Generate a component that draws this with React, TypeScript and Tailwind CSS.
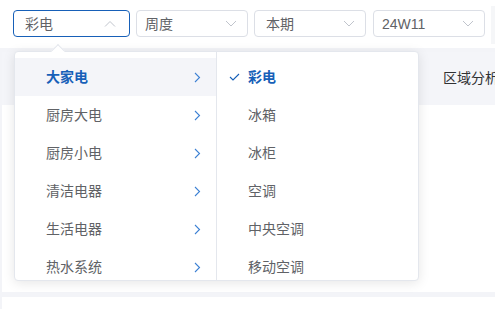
import React from "react";

const font = { fontFamily: '"Liberation Sans","Noto Sans CJK SC",sans-serif' };

function Chevron({ up, color = "#c0c4cc" }: { up?: boolean; color?: string }) {
  return (
    <svg width="12" height="7" viewBox="0 0 12 7" className="shrink-0">
      <path d={up ? "M1 6.5 L6 1.5 L11 6.5" : "M1 1 L6 6 L11 1"} fill="none" stroke={color} strokeWidth="1" />
    </svg>
  );
}

function Select({ label, w, active, pl = "pl-[11px]", pr = "pr-[10px]" }: { label: string; w: string; active?: boolean; pl?: string; pr?: string }) {
  return (
    <div
      className={`${w} h-[27px] shrink-0 rounded-[4px] border ${active ? "border-[#1760b8]" : "border-[#dcdfe6]"} bg-white flex items-center justify-between ${pl} ${pr}`}
    >
      <span className="text-[14px] text-[#606266] leading-none">{label}</span>
      <Chevron up={active} />
    </div>
  );
}

const left = ["大家电", "厨房大电", "厨房小电", "清洁电器", "生活电器", "热水系统"];
const right = ["彩电", "冰箱", "冰柜", "空调", "中央空调", "移动空调"];

export default function App() {
  return (
    <div className="w-[495px] h-[309px] bg-[#f3f4f8] relative overflow-hidden" style={font}>
      <div className="h-[48px] bg-white flex items-start pt-[10px] pl-[13px] gap-[6px]">
        <Select label="彩电" w="w-[117px]" active pl="pl-[11px]" pr="pr-[13px]" />
        <Select label="周度" w="w-[112px]" pl="pl-[8px]" />
        <Select label="本期" w="w-[112px]" />
        <div className="ml-[1px]">
          <Select label="24W11" w="w-[112px]" pl="pl-[8px]" />
        </div>
        <div className="w-[6px] h-[38px] -mt-[4px] bg-[#f5f6f8] shrink-0" />
        <div className="w-[20px] h-[27px] shrink-0 rounded-[4px] border border-[#dcdfe6] bg-white" />
      </div>
      <div className="mt-[4px] ml-[2px] h-[240px] bg-white">
        <div className="h-[53px] bg-[#f4f5f9] flex items-center pl-[441px]">
          <span className="text-[14px] text-[#303133] whitespace-nowrap">区域分析</span>
        </div>
      </div>
      <div className="mt-[5px] ml-[2px] h-[20px] bg-white" />

      {/* popover */}
      <div className="absolute left-[14px] top-[51px] w-[405px] h-[230px] bg-white rounded-[4px] border border-[#e4e7ed] shadow-[0_2px_12px_rgba(0,0,0,0.1)] flex overflow-hidden">
        <div className="w-[202px] border-r border-[#e4e7ed] pt-[6px]">
          {left.map((t, i) => (
            <div
              key={t}
              className={`h-[38px] flex items-center justify-between pl-[31px] pr-[15px] ${i === 0 ? "bg-[#f4f5f9]" : ""}`}
            >
              <span className={`text-[14px] ${i === 0 ? "text-[#1760b8] font-bold" : "text-[#606266]"}`}>{t}</span>
              <svg width="7" height="11" viewBox="0 0 7 11">
                <path d="M1 1 L5.5 5.5 L1 10" fill="none" stroke="#3f82d4" strokeWidth="1.1" />
              </svg>
            </div>
          ))}
        </div>
        <div className="flex-1 pt-[6px]">
          {right.map((t, i) => (
            <div key={t} className="h-[38px] flex items-center pl-[12px]">
              <span className="w-[19px] shrink-0">
                {i === 0 && (
                  <svg width="11" height="8" viewBox="0 0 11 8">
                    <path d="M1 4 L4 7 L10 1" fill="none" stroke="#1760b8" strokeWidth="1.1" />
                  </svg>
                )}
              </span>
              <span className={`text-[14px] ${i === 0 ? "text-[#1760b8] font-bold" : "text-[#606266]"}`}>{t}</span>
            </div>
          ))}
        </div>
      </div>
      {/* arrow */}
      <div className="absolute left-[53px] top-[46px] w-[10px] h-[10px] bg-white border-l border-t border-[#e4e7ed] rotate-45" />
    </div>
  );
}
